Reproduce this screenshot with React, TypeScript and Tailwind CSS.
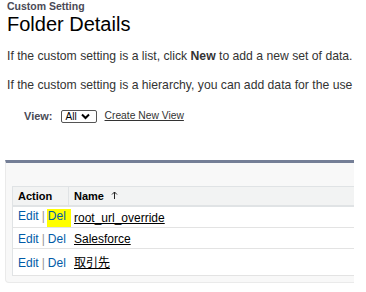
import React from "react";

const link = "text-[#015ba7]";

function Row({ name, h, highlight, last }: { name: string; h: string; highlight?: boolean; last?: boolean }) {
  return (
    <div className={`flex ${h} ${last ? "" : "border-b border-[#e3e3e3]"} bg-white`}>
      <div className="w-[56px] shrink-0 pl-[5px] flex items-center pt-[2px] whitespace-nowrap">
        <span className="leading-[14px] whitespace-nowrap">
          <span className={link}>Edit</span>
          <span className="text-[#999] mx-[3px]">|</span>
          {highlight ? (
            <span className={`${link} inline-block bg-[#ffff00] pl-[1px] -ml-[1px] pr-[5px] pt-[1px] pb-[4px] leading-[13px] align-baseline`}>Del</span>
          ) : (
            <span className={link}>Del</span>
          )}
        </span>
      </div>
      <div className="flex-1 pl-[5px] flex items-center pt-[2px]">
        <span className="text-black underline leading-[14px]">{name}</span>
      </div>
    </div>
  );
}

export default function App() {
  return (
    <div
      className="w-[366px] h-[292px] overflow-hidden bg-white text-[12px] text-[#222]"
      style={{ fontFamily: '"Liberation Sans", Arial, "Noto Sans CJK JP", sans-serif' }}
    >
      <div className="pl-[7px]">
        <div className="text-[10.5px] font-bold text-[#4a4a56] leading-[13px]">Custom Setting</div>
        <div className="text-[20px] leading-[22px] text-[#000]">Folder Details</div>
      </div>
      <div className="pl-[7px] mt-[14px] whitespace-nowrap leading-[14px] text-[12.2px] text-[#333]">
        If the custom setting is a list, click <b>New</b> to add a new set of data.
      </div>
      <div className="pl-[7px] mt-[15px] whitespace-nowrap leading-[14px] text-[12.2px] text-[#333]">
        If the custom setting is a hierarchy, you can add data for the use
      </div>
      <div className="flex items-center pl-[24px] mt-[17px] h-[14px]">
        <span className="font-bold text-[#4a4a56] text-[11px]">View:</span>
        <div className="ml-[8px] h-[13px] w-[36px] border border-[#555] rounded-[2px] flex items-center pl-[4px] text-[10px] text-black">
          All
          <svg width="9" height="7" viewBox="0 0 9 7" className="ml-[4px]">
            <path d="M1 1.5 L4.5 5 L8 1.5" stroke="#000" strokeWidth="2" fill="none" />
          </svg>
        </div>
        <span className="ml-[8px] text-[10.3px] underline text-[#333]">Create New View</span>
      </div>
      <div className="ml-[5px] mt-[37px] w-[349px] border-t-[3px] border-t-[#747e96] border-l border-b border-[#eaeaea] bg-[#f8f8f8] rounded-bl-[4px] pl-[6px] pt-[23px] pb-[6px]">
        <div className="border-l border-[#e0e3e5]">
          <div className="flex h-[21px] bg-[#f2f3f3] border-t border-b-2 border-[#e0e3e5] font-bold text-[11px] text-black">
            <div className="w-[56px] shrink-0 pl-[5px] flex items-center border-r border-[#e0e3e5]">Action</div>
            <div className="flex-1 pl-[5px] flex items-center">
              Name
              <svg width="7" height="8" viewBox="0 0 7 8" className="ml-[7px] -mt-[2px]">
                <path d="M3.5 1 V8 M1 3.5 L3.5 1 L6 3.5" stroke="#222" strokeWidth="1" fill="none" />
              </svg>
            </div>
          </div>
          <Row name="root_url_override" h="h-[21px]" highlight />
          <Row name="Salesforce" h="h-[21px]" />
          <Row name="取引先" h="h-[26px]" last />
          <div className="border-b border-[#e3e3e3]" />
        </div>
      </div>
    </div>
  );
}
